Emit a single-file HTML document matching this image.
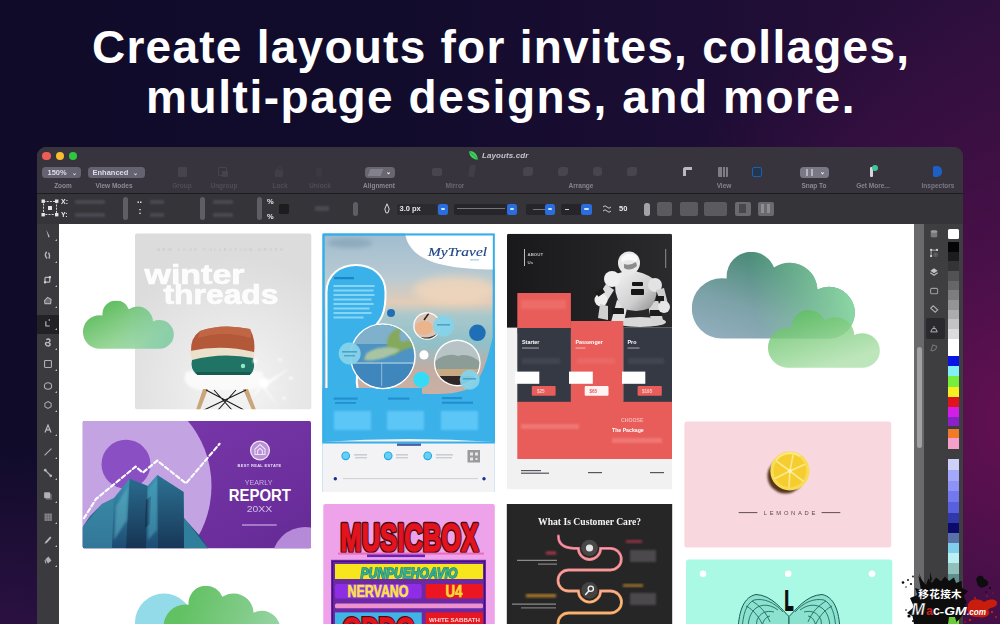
<!DOCTYPE html>
<html><head><meta charset="utf-8">
<style>
html,body{margin:0;padding:0;}
body{width:1000px;height:624px;overflow:hidden;position:relative;font-family:"Liberation Sans",sans-serif;background:#140d2e;}
#bg{position:absolute;left:0;top:0;width:1000px;height:624px;
background:
radial-gradient(ellipse 420px 440px at 1020px 420px, rgba(104,16,84,0.92) 0%, rgba(86,16,78,0.64) 40%, rgba(50,14,64,0) 100%),
radial-gradient(ellipse 260px 200px at 0px 640px, rgba(70,22,90,0.55) 0%, rgba(40,14,66,0) 100%),
linear-gradient(90deg,#0f0b29 0%,#120c2c 40%,#1c0d34 70%,#2c0f3c 100%);}
.a{position:absolute;}
h1{position:absolute;margin:0;left:0;top:0;width:1000px;color:#fff;font-weight:bold;font-size:46px;line-height:49px;white-space:nowrap;}
h1 span{display:block;position:absolute;}
#l1{left:92px;top:23.4px;letter-spacing:1.25px;}
#l2{left:146px;top:72.5px;letter-spacing:1.57px;}
#win{position:absolute;left:37px;top:147px;width:926px;height:490px;border-radius:9px 9px 0 0;background:#37343d;overflow:hidden;}
#canvas{position:absolute;left:22px;top:77px;width:855px;height:420px;background:#fff;overflow:hidden;}

#tb{position:absolute;left:0;top:0;width:926px;height:46px;background:#37343d;}
#tbline{position:absolute;left:0;top:45.5px;width:926px;height:1.5px;background:#1d1c21;}
.tl{position:absolute;top:4.5px;width:8.5px;height:8.5px;border-radius:50%;}
.pill{position:absolute;top:19.5px;height:11.5px;border-radius:3.5px;background:#656371;color:#dddbe6;font-size:7.5px;line-height:11.5px;font-weight:bold;filter:blur(0.6px);white-space:nowrap;}
.lbl{position:absolute;top:34.5px;font-size:6.5px;line-height:8px;color:#8d8b98;font-weight:bold;filter:blur(0.7px);white-space:nowrap;text-align:center;}
.lbl.dim{color:#4f4d58;}
.ic{position:absolute;filter:blur(0.7px);}
#pb{position:absolute;left:0;top:47px;width:926px;height:30px;background:#353439;}
.pt{position:absolute;font-size:7px;line-height:8px;color:#e8e8ec;font-weight:bold;filter:blur(0.4px);white-space:nowrap;}
.pf{position:absolute;height:4px;background:#4b4a52;filter:blur(1px);border-radius:1px;}
.sp{position:absolute;top:3px;width:5px;height:23px;border-radius:2.5px;background:#5f5e64;filter:blur(0.6px);}
.bb{position:absolute;top:9.5px;width:10.5px;height:11px;border-radius:2.5px;background:#2a6ddf;filter:blur(0.4px);}
.bb:after{content:"";position:absolute;left:3px;top:4px;width:4.5px;height:2px;background:#cfe0ff;border-radius:1px;}
.df{position:absolute;top:9.5px;height:11px;background:#26252a;border-radius:2px;}
.gs{position:absolute;top:7.5px;height:14px;background:#5b5a5f;border-radius:2px;filter:blur(0.5px);}

#tbx{position:absolute;left:0;top:77px;width:22px;height:420px;background:#3b3a3f;}
#tbx svg{position:absolute;left:2.5px;filter:blur(0.45px);opacity:0.78;transform:scale(0.86);}
.tri{position:absolute;left:17.5px;width:0;height:0;border-left:2.5px solid transparent;border-bottom:2.5px solid #b9b9be;}
#sb{position:absolute;left:877px;top:77px;width:10px;height:420px;background:#6a696c;}
#sbt{position:absolute;left:2.5px;top:123px;width:5.5px;height:101px;border-radius:3px;background:#a1a0a3;}
#dk{position:absolute;left:887px;top:77px;width:39px;height:420px;background:#3e3d40;}
#dk svg{position:absolute;left:1.5px;filter:blur(0.45px);opacity:0.75;transform:scale(0.82);}
#pal{position:absolute;left:910.5px;top:82px;width:11.5px;}
#pal i{position:absolute;left:0;width:11.5px;display:block;}
/*SECTION-CSS*/
</style></head><body>
<div id="bg"></div>
<h1><span id="l1">Create layouts for invites, collages,</span><span id="l2">multi-page designs, and more.</span></h1>
<div id="win">
<div id="tb">
<div class="tl" style="left:5px;background:#ee5c56;"></div>
<div class="tl" style="left:18.5px;background:#f6bd30;"></div>
<div class="tl" style="left:31.5px;background:#2dc840;"></div>
<svg class="ic" style="left:431px;top:3px;" width="11" height="11" viewBox="0 0 11 11"><path d="M1 1.5 C5 0.5 9 3 10 9.5 C6 10 1.5 7 1 1.5Z" fill="#3ed35c"/><path d="M1 1.5 C4 4 7 6 10 9.5" stroke="#1f8a3a" stroke-width="0.8" fill="none"/></svg>
<div class="a" style="left:445px;top:4px;font-size:8px;line-height:10px;font-weight:bold;font-style:italic;color:#c4c3cb;filter:blur(0.5px);letter-spacing:0.1px;">Layouts.cdr</div>
<div class="pill" style="left:4.5px;width:39.5px;"><span style="margin-left:6px;">150%</span><span style="margin-left:5px;font-size:6px;">&#x2304;</span></div>
<div class="pill" style="left:50.5px;width:57px;"><span style="margin-left:5px;">Enhanced</span><span style="margin-left:5px;font-size:6px;">&#x2304;</span></div>
<div class="lbl" style="left:16px;width:20px;">Zoom</div>
<div class="lbl" style="left:54px;width:46px;">View Modes</div>
<div class="lbl dim" style="left:134px;width:22px;">Group</div>
<div class="lbl dim" style="left:171px;width:32px;">Ungroup</div>
<div class="lbl dim" style="left:234px;width:18px;">Lock</div>
<div class="lbl dim" style="left:270px;width:26px;">Unlock</div>
<div class="ic" style="left:141px;top:20px;width:9px;height:10px;background:#45434d;border-radius:1px;"></div>
<div class="ic" style="left:181px;top:20px;width:7px;height:7px;border:1.5px solid #45434d;border-radius:1px;"></div>
<div class="ic" style="left:185px;top:24px;width:6px;height:6px;background:#45434d;border-radius:1px;"></div>
<div class="ic" style="left:238px;top:23px;width:8px;height:7px;background:#403e48;border-radius:1px;"></div>
<div class="ic" style="left:240px;top:19px;width:3px;height:5px;border:1px solid #403e48;border-radius:2px 2px 0 0;"></div>
<div class="ic" style="left:279px;top:20px;width:6px;height:10px;background:#3b3943;border-radius:3px;"></div>
<div class="pill" style="left:327.5px;width:30px;background:#68666f;"><span class="a" style="left:4px;top:2px;width:13px;height:7px;background:#83818c;transform:skewX(-20deg);"></span><span class="a" style="left:21px;top:0;font-size:6px;color:#fff;">&#x2304;</span></div>
<div class="lbl" style="left:322px;width:40px;color:#8a8894;">Alignment</div>
<div class="lbl dim" style="left:404px;width:28px;color:#6a6872;">Mirror</div>
<div class="ic" style="left:395px;top:21px;width:10px;height:8px;background:#47454f;border-radius:2px;"></div>
<div class="ic" style="left:432px;top:18px;width:6px;height:12px;background:#403e48;border-radius:1px;transform:skewX(-8deg);"></div>
<div class="lbl" style="left:528px;width:32px;color:#85838e;">Arrange</div>
<div class="ic" style="left:486px;top:20px;width:10px;height:9px;background:#47454f;border-radius:4px 2px 4px 2px;"></div>
<div class="ic" style="left:521px;top:20px;width:10px;height:9px;background:#47454f;border-radius:4px 2px 4px 2px;"></div>
<div class="ic" style="left:556px;top:20px;width:9px;height:9px;background:#47454f;border-radius:3px;"></div>
<div class="ic" style="left:590px;top:20px;width:10px;height:9px;background:#47454f;border-radius:4px 2px 4px 2px;"></div>
<div class="ic" style="left:646px;top:20px;width:9px;height:9px;border-left:3px solid #b9b7c0;border-top:3px solid #b9b7c0;border-radius:3px 0 0 0;box-sizing:border-box;"></div>
<div class="ic" style="left:681px;top:20px;width:10px;height:10px;background:#7e7c86;border-radius:1px;"></div>
<div class="ic" style="left:684.5px;top:20px;width:1px;height:10px;background:#3a3840;"></div>
<div class="ic" style="left:687.5px;top:20px;width:1px;height:10px;background:#3a3840;"></div>
<div class="ic" style="left:715px;top:20px;width:10px;height:10px;border:1.5px solid #1f5fae;box-sizing:border-box;border-radius:2px;background:#23364f;"></div>
<div class="lbl" style="left:676px;width:22px;color:#85838e;">View</div>
<div class="pill" style="left:762.5px;width:29px;background:#7a7884;"><span class="a" style="left:6px;top:2px;width:2.5px;height:7px;background:#b5b3bd;"></span><span class="a" style="left:11px;top:2px;width:2.5px;height:7px;background:#b5b3bd;"></span><span class="a" style="left:20px;top:0;font-size:6px;color:#fff;">&#x2304;</span></div>
<div class="lbl" style="left:760px;width:34px;color:#8a8894;">Snap To</div>
<div class="ic" style="left:833px;top:20px;width:3px;height:10px;background:#d8d6de;border-radius:1px;"></div>
<div class="ic" style="left:835px;top:18px;width:6px;height:6px;background:#3fc79a;border-radius:50%;"></div>
<div class="lbl" style="left:815px;width:42px;color:#85838e;">Get More...</div>
<div class="ic" style="left:896px;top:19px;width:9px;height:11px;background:#1d5fc4;border-radius:2px 5px 5px 2px;"></div>
<div class="lbl" style="left:880px;width:42px;color:#7b7985;">Inspectors</div>
</div>
<div id="tbline"></div>
<div id="pb">
<svg class="a" style="left:4px;top:5px;filter:blur(0.4px);" width="18" height="18" viewBox="0 0 18 18"><rect x="2.5" y="2.5" width="13" height="13" fill="none" stroke="#d5d5da" stroke-width="1" stroke-dasharray="2 1.2"/><g fill="#e6e6ea"><rect x="0.5" y="0.5" width="3.4" height="3.4"/><rect x="14" y="0.5" width="3.4" height="3.4"/><rect x="0.5" y="14" width="3.4" height="3.4"/><rect x="14" y="14" width="3.4" height="3.4"/><rect x="7" y="7" width="4" height="4"/></g></svg>
<div class="pt" style="left:24px;top:4px;">X:</div>
<div class="pt" style="left:24px;top:17px;">Y:</div>
<div class="pf" style="left:38px;top:6px;width:30px;"></div>
<div class="pf" style="left:38px;top:19px;width:30px;"></div>
<div class="sp" style="left:86px;"></div>
<div class="pt" style="left:100px;top:2px;font-size:9px;">..</div>
<div class="pt" style="left:101.5px;top:13px;font-size:9px;">:</div>
<div class="pf" style="left:113px;top:6px;width:14px;"></div>
<div class="pf" style="left:113px;top:19px;width:14px;"></div>
<div class="sp" style="left:163px;"></div>
<div class="pf" style="left:176px;top:6px;width:20px;"></div>
<div class="pf" style="left:176px;top:19px;width:20px;"></div>
<div class="sp" style="left:219.5px;"></div>
<div class="pt" style="left:230px;top:3.5px;font-size:7.5px;">%</div>
<div class="pt" style="left:230px;top:18.5px;font-size:7.5px;">%</div>
<div class="a" style="left:242px;top:9.5px;width:10px;height:10px;background:#1d1d20;border-radius:1.5px;"></div>
<div class="pf" style="left:278px;top:12px;width:14px;height:5px;"></div>
<div class="sp" style="left:316px;top:8px;height:14px;"></div>
<svg class="a" style="left:347px;top:9px;filter:blur(0.4px);" width="6" height="11" viewBox="0 0 6 11"><path d="M3 0.8 L5.2 6 L4 9.8 L2 9.8 L0.8 6Z" fill="none" stroke="#d8d8dd" stroke-width="1"/></svg>
<div class="df" style="left:360px;width:40px;background:#2b2a2f;"></div>
<div class="pt" style="left:362.5px;top:11px;font-size:7.5px;">3.0 px</div>
<div class="bb" style="left:400.5px;"></div>
<div class="df" style="left:417px;width:53px;"></div>
<div class="a" style="left:420px;top:14px;width:48px;height:1.2px;background:#77767c;"></div>
<div class="bb" style="left:469.5px;"></div>
<div class="df" style="left:489px;width:20px;"></div>
<div class="a" style="left:496px;top:14.5px;width:12px;height:1.2px;background:#77767c;"></div>
<div class="bb" style="left:507.5px;"></div>
<div class="df" style="left:524px;width:21px;"></div>
<div class="a" style="left:528px;top:14.5px;width:4px;height:1.4px;background:#d0d0d4;"></div>
<div class="bb" style="left:544px;"></div>
<svg class="a" style="left:565px;top:10px;filter:blur(0.3px);" width="10" height="10" viewBox="0 0 10 10"><path d="M1 3 Q3 0.5 5 3 T9 3 M1 7 Q3 4.5 5 7 T9 7" fill="none" stroke="#c8c8cc" stroke-width="1"/></svg>
<div class="pt" style="left:582px;top:11px;font-size:7.5px;">50</div>
<div class="sp" style="left:607px;top:8.5px;height:13px;width:5.5px;background:#a3a2a8;"></div>
<div class="gs" style="left:620px;width:14.5px;"></div>
<div class="gs" style="left:643px;width:18px;"></div>
<div class="gs" style="left:667px;width:23px;"></div>
<div class="gs" style="left:697.5px;width:16px;background:#6b6a6f;"></div>
<div class="a" style="left:702px;top:10px;width:7px;height:9px;background:#48474c;filter:blur(0.6px);"></div>
<div class="gs" style="left:720.5px;width:16.5px;background:#6b6a6f;"></div>
<div class="a" style="left:724px;top:10px;width:3px;height:9px;background:#8f8e94;filter:blur(0.6px);"></div>
<div class="a" style="left:730px;top:10px;width:3px;height:9px;background:#8f8e94;filter:blur(0.6px);"></div>
</div>
<div id="tbx">
<div class="a" style="left:0;top:91px;width:22px;height:19px;background:#222125;"></div>
<svg style="top:2.0px" width="16" height="16" viewBox="0 0 16 16"><path d="M6 3 L10 11 L8.5 12 Z" fill="#e4e4e8"/></svg><div class="tri" style="top:15.0px"></div>
<svg style="top:24.0px" width="16" height="16" viewBox="0 0 16 16"><path d="M6.5 3 C4 6 5 9 7 11 M8.5 4 C10.5 7 10 9 9 11" stroke="#d8d8dc" stroke-width="1.6" fill="none"/></svg><div class="tri" style="top:37.0px"></div>
<svg style="top:48.0px" width="16" height="16" viewBox="0 0 16 16"><path d="M4.5 5 H10 V10.5 M4.5 5 V10.5 H10" stroke="#d8d8dc" stroke-width="1.5" fill="none"/><rect x="9" y="3.5" width="2.4" height="2.4" fill="#fff"/><rect x="3.3" y="9.5" width="2.4" height="2.4" fill="#fff"/></svg><div class="tri" style="top:61.0px"></div>
<svg style="top:69.0px" width="16" height="16" viewBox="0 0 16 16"><path d="M4 7.5 L7.5 3.8 L11.5 6 L11 11 L4.5 11Z" stroke="#d0d0d4" stroke-width="1.4" fill="#77767c"/></svg><div class="tri" style="top:82.0px"></div>
<svg style="top:91.0px" width="16" height="16" viewBox="0 0 16 16"><path d="M5.5 11.5 L5.5 6 M5 11.5 H10" stroke="#e8e8ec" stroke-width="1.3" fill="none"/><circle cx="9.5" cy="4.5" r="0.9" fill="#fff"/></svg><div class="tri" style="top:104.0px"></div>
<svg style="top:111.0px" width="16" height="16" viewBox="0 0 16 16"><path d="M6 4 C10 2 12 6 8.5 7.5 C12 8 10.5 13 6.5 11 C4 9.5 5 7 7 7.5" stroke="#e4e4e8" stroke-width="1.6" fill="none"/></svg><div class="tri" style="top:124.0px"></div>
<svg style="top:132.0px" width="16" height="16" viewBox="0 0 16 16"><rect x="4" y="4" width="8" height="8" rx="1" stroke="#d0d0d4" stroke-width="1.3" fill="none"/></svg><div class="tri" style="top:145.0px"></div>
<svg style="top:153.5px" width="16" height="16" viewBox="0 0 16 16"><ellipse cx="8" cy="8" rx="4.2" ry="3.8" stroke="#d0d0d4" stroke-width="1.3" fill="none"/></svg><div class="tri" style="top:166.5px"></div>
<svg style="top:173.0px" width="16" height="16" viewBox="0 0 16 16"><path d="M8 4 L11.6 6 L11.6 10 L8 12 L4.4 10 L4.4 6Z" stroke="#c8c8cc" stroke-width="1.2" fill="none"/></svg><div class="tri" style="top:186.0px"></div>
<svg style="top:197.0px" width="16" height="16" viewBox="0 0 16 16"><path d="M4.5 12 L8 3.5 L11.5 12 M5.8 9 H10.2" stroke="#e0e0e4" stroke-width="1.4" fill="none"/></svg><div class="tri" style="top:210.0px"></div>
<svg style="top:220.0px" width="16" height="16" viewBox="0 0 16 16"><path d="M4 12 L12 4" stroke="#d0d0d4" stroke-width="1.3" fill="none"/></svg><div class="tri" style="top:233.0px"></div>
<svg style="top:241.0px" width="16" height="16" viewBox="0 0 16 16"><path d="M4.5 4.5 L11.5 11.5" stroke="#c8c8cc" stroke-width="1.5" fill="none"/><circle cx="4.8" cy="4.8" r="1.6" fill="#d8d8dc"/><circle cx="11.2" cy="11.2" r="1.6" fill="#d8d8dc"/></svg><div class="tri" style="top:254.0px"></div>
<svg style="top:264.0px" width="16" height="16" viewBox="0 0 16 16"><rect x="5.5" y="5.5" width="7" height="7" rx="1" fill="#77767c"/><rect x="3.5" y="3.5" width="7" height="7" rx="1" fill="#d4d4d8"/></svg><div class="tri" style="top:277.0px"></div>
<svg style="top:285.0px" width="16" height="16" viewBox="0 0 16 16"><rect x="4" y="4" width="8.5" height="8.5" fill="#a2a1a6"/><path d="M4 7 H12.5 M4 10 H12.5 M7 4 V12.5 M10 4 V12.5" stroke="#5a595e" stroke-width="0.6"/></svg><div class="tri" style="top:298.0px"></div>
<svg style="top:308.0px" width="16" height="16" viewBox="0 0 16 16"><path d="M4 12.5 L5 10 L10.5 4 L12 5.5 L6.5 11.5Z" fill="#e0e0e4"/></svg><div class="tri" style="top:321.0px"></div>
<svg style="top:328.0px" width="16" height="16" viewBox="0 0 16 16"><path d="M5 7 L8.5 4 L12 8.5 L8 12 Z" fill="#d0d0d4"/><path d="M4.5 8 L5.5 12" stroke="#d0d0d4" stroke-width="1.2"/></svg><div class="tri" style="top:341.0px"></div>
</div>
<div id="canvas">
<svg class="a" style="left:0;top:0;" width="855" height="400" viewBox="59 224 855 400" font-family="Liberation Sans, sans-serif">
<defs>
<filter id="b05" x="-20%" y="-20%" width="140%" height="140%"><feGaussianBlur stdDeviation="0.5"/></filter>
<filter id="b1" x="-20%" y="-20%" width="140%" height="140%"><feGaussianBlur stdDeviation="1"/></filter>
<filter id="b2" x="-30%" y="-30%" width="160%" height="160%"><feGaussianBlur stdDeviation="2"/></filter>
<filter id="b4" x="-50%" y="-50%" width="200%" height="200%"><feGaussianBlur stdDeviation="4"/></filter>
<filter id="b8" x="-50%" y="-50%" width="200%" height="200%"><feGaussianBlur stdDeviation="8"/></filter>
<g id="cl"><circle cx="17.3" cy="31" r="17.3"/><circle cx="32" cy="12.8" r="12.8"/><circle cx="57.2" cy="18.2" r="12"/><circle cx="76.4" cy="33.8" r="14.4"/><rect x="17.3" y="14" width="59.1" height="34.2"/><rect x="10" y="20" width="30" height="20"/></g>
<linearGradient id="gc1" gradientUnits="userSpaceOnUse" x1="25" y1="2" x2="50" y2="48"><stop offset="0" stop-color="#5cbd5c"/><stop offset="0.5" stop-color="#84cd84"/><stop offset="1" stop-color="#abdfa9"/></linearGradient>
<linearGradient id="gc1b" gradientUnits="userSpaceOnUse" x1="40" y1="0" x2="91" y2="20"><stop offset="0" stop-color="#7cc8a0" stop-opacity="0"/><stop offset="1" stop-color="#7cc8a8" stop-opacity="0.75"/></linearGradient>
<linearGradient id="gc2" gradientUnits="userSpaceOnUse" x1="25" y1="0" x2="10" y2="48"><stop offset="0" stop-color="#4c8c7a"/><stop offset="0.55" stop-color="#7da2a8"/><stop offset="1" stop-color="#92aebe"/></linearGradient>
<linearGradient id="gc2b" gradientUnits="userSpaceOnUse" x1="35" y1="30" x2="88" y2="22"><stop offset="0" stop-color="#86cf9e" stop-opacity="0"/><stop offset="1" stop-color="#8ad6a2" stop-opacity="1"/></linearGradient>
<linearGradient id="gc3" gradientUnits="userSpaceOnUse" x1="30" y1="0" x2="45" y2="48"><stop offset="0" stop-color="#60bf60"/><stop offset="1" stop-color="#aee0ac"/></linearGradient>
<linearGradient id="gc4" gradientUnits="userSpaceOnUse" x1="20" y1="0" x2="91" y2="25"><stop offset="0" stop-color="#62c162"/><stop offset="0.6" stop-color="#7fcb86"/><stop offset="1" stop-color="#96d4a4"/></linearGradient>
</defs>
<g id="c1">
<defs><radialGradient id="g1" gradientUnits="userSpaceOnUse" cx="235" cy="385" r="130"><stop offset="0" stop-color="#f6f6f6"/><stop offset="0.45" stop-color="#e9e9ea"/><stop offset="1" stop-color="#dcdcdd"/></radialGradient><clipPath id="cp1"><rect x="135" y="233.5" width="176.3" height="175.8" rx="2"/></clipPath></defs>
<rect x="135" y="233.5" width="176.3" height="175.8" rx="2" fill="url(#g1)"/>
<g clip-path="url(#cp1)">
<text x="157" y="251" font-size="4.4" textLength="126" lengthAdjust="spacing" fill="#c6c6c8" filter="url(#b05)">NEW LOOK COLLECTION DROPS</text>
<g filter="url(#b05)" fill="#fff" fill-opacity="0.9" font-weight="bold" font-size="27.5" stroke="#fff" stroke-opacity="0.9" stroke-width="0.7">
<text id="wt1" x="144.5" y="284.4" textLength="100" lengthAdjust="spacingAndGlyphs">winter</text>
<text id="wt2" x="163.5" y="303.6" textLength="115" lengthAdjust="spacingAndGlyphs">threads</text></g>
<!-- chair seat -->
<path d="M186 372 Q222 366 262 372 Q268 386 250 390 L200 390 Q180 386 186 372Z" fill="#fafafa" filter="url(#b1)"/>
<!-- legs -->
<path d="M203 389 L196 410 L200 410 L208 389Z M243 389 L252 410 L256 410 L248 389Z" fill="#c9a57a"/>
<path d="M206 390 L244 410 M246 390 L204 410 M214 390 L232 410 M236 390 L218 410" stroke="#1c1c1c" stroke-width="1.1" fill="none"/>
<!-- clothes -->
<path d="M191 352 Q190 338 200 331 Q222 323 250 329 Q256 340 254 354 Q222 352 191 352Z" fill="#b4583a"/>
<path d="M200 331 Q222 323 250 329 Q252 334 251 338 Q224 330 198 338Z" fill="#c46a48" opacity="0.8"/>
<path d="M190 351 Q222 344 254 352 L254 361 Q222 356 192 361Z" fill="#ebe0cc"/>
<path d="M192 360 Q222 352 253 358 Q256 368 251 374 L196 374 Q190 368 192 360Z" fill="#1f7465"/>
<path d="M196 372 L251 372 L250 375 L197 375Z" fill="#175a4e"/>
<circle cx="243" cy="366" r="2.2" fill="#8fe8c8" filter="url(#b05)"/>
<!-- sparkles -->
<g fill="#fff" filter="url(#b1)"><circle cx="264" cy="383" r="5"/><circle cx="255" cy="361" r="2.2"/><circle cx="280" cy="360" r="1.4"/><circle cx="291" cy="378" r="1.6"/><circle cx="284" cy="398" r="1.5"/><path d="M264 383 L290 368 L266 386 L292 392 L264 386 L278 406 L262 387 L250 400 L261 384 L240 380 Z" opacity="0.9"/></g>
</g></g>
<g id="c2">
<defs>
<clipPath id="cp2"><rect x="322.5" y="233.5" width="172.3" height="258.5" rx="1.5"/></clipPath>
<linearGradient id="sky" x1="0" y1="0" x2="0" y2="1"><stop offset="0" stop-color="#a2bdd0"/><stop offset="0.26" stop-color="#b8cad2"/><stop offset="0.42" stop-color="#e2ccb8"/><stop offset="0.5" stop-color="#a8c8cc"/><stop offset="0.68" stop-color="#90c0c8"/><stop offset="0.84" stop-color="#c4aca2"/><stop offset="1" stop-color="#ccb0a4"/></linearGradient>
<clipPath id="cpa"><circle cx="382.8" cy="356.2" r="31.5"/></clipPath>
<clipPath id="cpb"><circle cx="427" cy="326" r="12.6"/></clipPath>
<clipPath id="cpc"><circle cx="457.3" cy="363" r="22"/></clipPath>
</defs>
<g clip-path="url(#cp2)">
<rect x="322" y="233" width="174" height="260" fill="#3bb1ea"/>
<rect x="324.5" y="235.5" width="168.3" height="160" fill="url(#sky)"/>
<ellipse cx="455" cy="290" rx="42" ry="14" fill="#f3d6ba" opacity="0.8" filter="url(#b4)"/>
<ellipse cx="350" cy="243" rx="22" ry="5" fill="#7f9db0" opacity="0.6" filter="url(#b2)"/>
<path d="M405 233 C409 260 440 269.5 496 269.5 L496 233Z" fill="#ffffff"/>
<text x="428" y="256" font-size="11.5" font-style="italic" fill="#1f4585" textLength="59" lengthAdjust="spacingAndGlyphs" font-family="Liberation Serif, serif" filter="url(#b05)" stroke="#1f4585" stroke-width="0.15">MyTravel</text>
<rect x="470" y="259" width="9" height="1.6" fill="#b9d7ea" filter="url(#b05)"/>
<!-- blue right/bottom region -->
<path d="M496 326 C488 352 486 376 470 388 C450 398 420 392 400 394 L322 394 L322 445 L496 445Z" fill="#3bb1ea"/>
<!-- left blob -->
<path d="M326.5 394 L326.5 292 C326.5 256 385.5 256 385.5 292 C386 318 378 322 372 330 C360 350 352 380 360 396Z" fill="#3bb1ea" stroke="#fff" stroke-width="2"/>
<rect x="322" y="388" width="100" height="12" fill="#3bb1ea"/>
<rect x="334" y="277" width="20" height="2.2" fill="#1b86c4" filter="url(#b05)"/>
<g fill="#8fdaf8" filter="url(#b05)" opacity="0.9"><rect x="333.5" y="285" width="41" height="2"/><rect x="333.5" y="289.5" width="40" height="2"/><rect x="333.5" y="294" width="41" height="2"/><rect x="333.5" y="298.5" width="38" height="2"/><rect x="333.5" y="303" width="40" height="2"/><rect x="333.5" y="307.5" width="36" height="2"/><rect x="333.5" y="312" width="38" height="2"/><rect x="333.5" y="316.5" width="30" height="2"/></g>
<!-- circles -->
<circle cx="382.8" cy="356.2" r="33" fill="#fff"/>
<g clip-path="url(#cpa)"><rect x="350" y="322" width="66" height="68" fill="#4d93c4"/><rect x="350" y="322" width="66" height="22" fill="#7fb0cc"/><rect x="350" y="364" width="66" height="26" fill="#3f86bd"/>
<path d="M388 352 C384 338 392 328 404 327 C398 332 398 338 402 342 C410 338 416 342 418 348 C410 346 400 350 394 356Z" fill="#86a85c" filter="url(#b1)"/><path d="M366 354 C376 346 392 346 400 350 C392 356 376 362 364 360Z" fill="#a9c4a2" filter="url(#b1)"/><rect x="350" y="362" width="66" height="2" fill="#9cc6dc" opacity="0.7"/><rect x="381" y="362" width="1.2" height="24" fill="#9cc6dc" opacity="0.7"/></g>
<circle cx="427" cy="326" r="13.8" fill="#fff"/>
<g clip-path="url(#cpb)"><rect x="412" y="312" width="30" height="28" fill="#d9c4b6"/><ellipse cx="424" cy="328" rx="9" ry="7" fill="#eab48c"/><path d="M414 334 Q426 342 440 332 L440 340 L414 340Z" fill="#3c2c28"/><path d="M424 320 L429 313" stroke="#2a2020" stroke-width="1.5"/></g>
<circle cx="457.3" cy="363" r="23.4" fill="#fff"/>
<g clip-path="url(#cpc)"><rect x="434" y="340" width="48" height="48" fill="#b7c3c5"/><path d="M434 362 Q446 352 458 356 Q470 352 482 364 L482 372 L434 372Z" fill="#8b9d96"/><rect x="434" y="369" width="48" height="8" fill="#c7a982"/><rect x="434" y="376" width="48" height="12" fill="#2f2826"/></g>
<circle cx="391" cy="313" r="4" fill="#1f6fb6"/><circle cx="477.4" cy="332.8" r="8.3" fill="#1f6fb6"/>
<circle cx="424" cy="354.9" r="4.6" fill="#fff"/>
<circle cx="421.4" cy="379.7" r="8" fill="#35dbf6"/>
<g fill="#86d3ea" opacity="0.95"><circle cx="349.7" cy="353.5" r="11"/><circle cx="443.5" cy="326" r="10.5"/><circle cx="469.7" cy="379.7" r="10"/></g>
<g fill="#4aa4c6" filter="url(#b05)"><rect x="342" y="351" width="15" height="1.6"/><rect x="344" y="355" width="11" height="1.4"/><rect x="437" y="324" width="13" height="1.6"/><rect x="463" y="378" width="13" height="1.6"/></g>
<!-- headings & boxes -->
<g fill="#238fcf" filter="url(#b05)"><rect x="333.6" y="397.5" width="24" height="2.2"/><rect x="335" y="402" width="21" height="1.8"/><rect x="388" y="397.5" width="21.5" height="2.2"/><rect x="442" y="397" width="20" height="2.2"/><rect x="442" y="401.6" width="31" height="2.2"/></g>
<g fill="#5cc6f6" filter="url(#b1)"><rect x="334" y="411" width="37" height="19"/><rect x="387" y="411" width="37" height="19"/><rect x="441" y="411" width="37" height="19"/></g>
<!-- bottom -->
<path d="M322 442 Q408 436 496 442 L496 493 L322 493Z" fill="#f3f3f5"/>
<rect x="397" y="443.3" width="24" height="2.6" fill="#2a4a9a" filter="url(#b05)" opacity="0.85"/>
<g><circle cx="345.7" cy="455.8" r="3.8" fill="#5fd2f6" stroke="#2aa6de" stroke-width="1.1"/><circle cx="388.2" cy="455.8" r="3.8" fill="#5fd2f6" stroke="#2aa6de" stroke-width="1.1"/><circle cx="427.7" cy="455.8" r="3.8" fill="#5fd2f6" stroke="#2aa6de" stroke-width="1.1"/></g>
<g fill="#c9cdd3" filter="url(#b05)"><rect x="354" y="454" width="13" height="1.6"/><rect x="355" y="457" width="12" height="1.4"/><rect x="396" y="454" width="12" height="1.6"/><rect x="396" y="457" width="12" height="1.4"/><rect x="436" y="454" width="17" height="1.6"/><rect x="436" y="457" width="16" height="1.4"/></g>
<g filter="url(#b05)"><rect x="467.5" y="450" width="12.5" height="12.5" fill="#9a9a9c"/><path d="M470 452.5h3v3h-3z M475 452.5h3v3h-3z M470 457.5h3v3h-3z M475.5 458h2v2h-2z" fill="#e6e6e8"/></g>
<rect x="343" y="478.3" width="135" height="0.8" fill="#c3c5cc"/>
<circle cx="335.3" cy="478.7" r="1.7" fill="#18308a"/><circle cx="484" cy="478.7" r="1.7" fill="#18308a"/>
</g>
<rect x="323.5" y="234.5" width="170.3" height="208" fill="none" stroke="#36aee8" stroke-width="2"/>
</g>
<g id="c3">
<defs><clipPath id="cp3"><rect x="507" y="233.8" width="165" height="255.5" rx="1.5"/></clipPath>
<linearGradient id="dk3" x1="0" y1="0" x2="1" y2="0"><stop offset="0" stop-color="#19191b"/><stop offset="0.6" stop-color="#232325"/><stop offset="1" stop-color="#2b2b2d"/></linearGradient>
<linearGradient id="rb" x1="0" y1="0" x2="1" y2="1"><stop offset="0" stop-color="#f4f4f4"/><stop offset="0.6" stop-color="#cfcfcf"/><stop offset="1" stop-color="#8a8a8a"/></linearGradient></defs>
<rect x="507" y="233.8" width="165" height="255.5" rx="1.5" fill="#f1f1f2"/>
<g clip-path="url(#cp3)">
<rect x="507" y="233.8" width="165" height="93.8" fill="url(#dk3)"/>
<!-- robot -->
<g filter="url(#b05)">
<ellipse cx="640" cy="322" rx="26" ry="5" fill="#d8d8d8"/>
<path d="M617 300 L611 322 L623 326 L628 304Z" fill="#e2e2e2"/><path d="M648 304 L652 326 L664 324 L658 300Z" fill="#d4d4d4"/>
<rect x="612" y="308" width="12" height="6" fill="#1a1a1a"/><rect x="650" y="310" width="12" height="6" fill="#1a1a1a"/>
<path d="M616 274 Q636 266 655 280 Q660 296 650 308 Q636 314 622 308 Q612 292 616 274Z" fill="url(#rb)"/>
<rect x="632" y="282" width="11" height="4" rx="1" fill="#151515"/><rect x="631" y="289" width="13" height="6" rx="1" fill="#151515"/>
<circle cx="612" cy="279" r="8" fill="#f0f0f0"/><circle cx="655" cy="285" r="7" fill="#e3e3e3"/>
<path d="M606 284 L597 298 L604 306 L614 290Z" fill="#dcdcdc"/><circle cx="601" cy="300" r="6.5" fill="#efefef"/><rect x="596" y="290" width="8" height="5" fill="#1a1a1a" transform="rotate(-35 600 292)"/>
<path d="M600 304 L598 318 L608 320 L608 306Z" fill="#d0d0d0"/>
<path d="M656 290 L662 306 L668 304 L664 288Z" fill="#cfcfcf"/><circle cx="664" cy="307" r="6" fill="#e6e6e6"/><rect x="656" y="296" width="8" height="5" fill="#1a1a1a"/>
<ellipse cx="629" cy="263" rx="11" ry="11.5" fill="#e9e9e9"/><path d="M621 258 Q629 250 638 257 L636 262 Q629 258 622 262Z" fill="#fafafa"/><path d="M624 268 Q630 272 637 266 L636 262 Q630 266 624 264Z" fill="#8c8c8c"/>
</g>
<rect x="524" y="249" width="1" height="17" fill="#bdbdbd"/><rect x="665.2" y="249" width="1" height="19" fill="#8d8d8d"/>
<g fill="#bcbcbc" font-size="4.4" font-weight="bold" filter="url(#b05)"><text x="527.5" y="255.6">ABOUT</text><text x="527.5" y="264">Us</text></g>
<!-- blocks -->
<rect x="517.3" y="293" width="53.6" height="40" fill="#e85c59"/>
<rect x="521" y="300" width="45" height="9" fill="#ee6c68" filter="url(#b1)"/>
<rect x="517.3" y="401" width="155" height="58" fill="#e85c59"/>
<rect x="570.9" y="321" width="52.4" height="90" fill="#e85c59"/>
<rect x="517.3" y="328" width="53.6" height="73.8" fill="#353943"/>
<rect x="623.3" y="327.6" width="49" height="74.2" fill="#353943"/>
<g font-size="5.4" font-weight="bold" fill="#fff" filter="url(#b05)"><text x="522" y="343.5">Starter</text><text x="575.5" y="343.5">Passenger</text><text x="627.5" y="343.5">Pro</text></g>
<g filter="url(#b05)"><rect x="522" y="347.4" width="17" height="1.3" fill="#8a8e98"/><rect x="575.5" y="347.4" width="10" height="1.3" fill="#f3a19e"/><rect x="627.5" y="347.4" width="12" height="1.3" fill="#8a8e98"/>
<rect x="522" y="358" width="38" height="6" fill="#3f444f" filter="url(#b1)"/><rect x="628" y="358" width="36" height="6" fill="#3f444f" filter="url(#b1)"/><rect x="577" y="358" width="38" height="6" fill="#ea6865" filter="url(#b1)"/></g>
<g fill="#fff"><rect x="515" y="371.6" width="24.3" height="12.2"/><rect x="569" y="371.6" width="23.8" height="12.2"/><rect x="622" y="371.6" width="23.3" height="12.2"/></g>
<rect x="531.8" y="386" width="23.8" height="9.8" rx="1" fill="#e85c59"/><rect x="637.6" y="386" width="24.2" height="9.8" rx="1" fill="#e85c59"/>
<rect x="584.7" y="386" width="23.8" height="9.8" rx="1" fill="#fdf3f2"/>
<g font-size="4.6" font-weight="bold" filter="url(#b05)"><text x="537" y="392.8" fill="#fbd0ce">$25</text><text x="589.5" y="392.8" fill="#e85c59">$65</text><text x="642" y="392.8" fill="#fbd0ce">$195</text></g>
<g fill="#fff" font-size="5.2" font-weight="bold" filter="url(#b05)"><text x="621" y="421.6" fill="#f7b6b3">CHOOSE</text><text x="612" y="431.6">The Package</text></g>
<g filter="url(#b1)" fill="#ef7774"><rect x="521" y="424" width="58" height="5"/><rect x="612" y="438" width="50" height="5"/></g>
<g fill="#55555a" filter="url(#b05)"><rect x="521" y="470" width="20" height="1.2"/><rect x="521" y="472.6" width="28" height="1.2"/><rect x="588" y="472" width="14" height="1.2"/><rect x="650" y="472" width="14" height="1.2"/></g>
</g></g>
<g id="c4">
<defs><clipPath id="cp4"><rect x="82.8" y="421" width="228.2" height="127.3" rx="1.5"/></clipPath>
<linearGradient id="pu" x1="0" y1="0" x2="1" y2="1"><stop offset="0" stop-color="#7d3aae"/><stop offset="1" stop-color="#652a96"/></linearGradient>
<linearGradient id="bl1" x1="0" y1="0" x2="0" y2="1"><stop offset="0" stop-color="#3f97b4"/><stop offset="1" stop-color="#1c4a72"/></linearGradient>
<linearGradient id="bl2" x1="0" y1="0" x2="0" y2="1"><stop offset="0" stop-color="#2a6b8e"/><stop offset="1" stop-color="#163352"/></linearGradient></defs>
<g clip-path="url(#cp4)">
<rect x="82" y="420" width="230" height="130" fill="url(#pu)"/>
<ellipse cx="122" cy="486" rx="89.5" ry="96" fill="#c3a3e2"/>
<circle cx="126" cy="464.2" r="24.5" fill="#8a4fc2"/>
<circle cx="305" cy="560" r="33" fill="#b58bd9"/>
<!-- building -->
<path d="M82 548.5 L82 528 L90 516 L102 504 L114 498 L129.6 478.6 L147.6 486 L157.2 475 L183.6 492 L184 518 L200 536 L208 548.5Z" fill="url(#bl1)"/>
<path d="M129.6 478.6 L147.6 486 L146 548.5 L126 548.5Z" fill="url(#bl2)"/>
<path d="M157.2 475 L183.6 492 L184 548.5 L158 548.5Z" fill="url(#bl2)" opacity="0.85"/>
<path d="M82 528 L102 504 L114 498 L112 548.5 L82 548.5Z" fill="#3c8aa8" opacity="0.7"/>
<path d="M146 500 L151 496 L150 524 L145 528Z" fill="#14304e" opacity="0.8"/>
<path d="M184 518 L208 548.5 L184 548.5Z" fill="#2f7f9c"/>
<g filter="url(#b1)" opacity="0.55"><path d="M116 506 L128 486 L127 520 L114 540Z" fill="#5fb5c8"/><path d="M148 490 L157 479 L157 530 L148 540Z" fill="#4aa3bd"/></g>
<polyline points="84,518.2 96,499 135.6,466.6 142.8,472.6 157.2,460.6 186,483.4 219.6,443.8" fill="none" stroke="#fff" stroke-width="2.1" stroke-dasharray="4.2 2.8" stroke-linecap="round"/>
<circle cx="260" cy="450.5" r="9.4" fill="#b992d6" stroke="#f1e6fa" stroke-width="1.3"/>
<path d="M255 454.5 L255 449 L260 444.5 L265 449 L265 454.5 Z M257.6 454.5 L257.6 450.5 L260 448.3 L262.4 450.5 L262.4 454.5" fill="none" stroke="#efe2fa" stroke-width="1.1"/>
<text x="259.6" y="466.6" text-anchor="middle" font-size="3.6" font-weight="bold" fill="#eadcf6" letter-spacing="0.3" filter="url(#b05)" textLength="44" lengthAdjust="spacingAndGlyphs">BEST REAL ESTATE</text>
<text x="258.6" y="484.8" text-anchor="middle" font-size="7.4" fill="#c9aee2" textLength="27.6" lengthAdjust="spacingAndGlyphs" filter="url(#b05)">YEARLY</text>
<text x="259.8" y="501.2" text-anchor="middle" font-size="16.6" font-weight="bold" fill="#fff" textLength="62.3" lengthAdjust="spacingAndGlyphs">REPORT</text>
<text x="259.4" y="511.6" text-anchor="middle" font-size="9" fill="#d3bde8" textLength="25.4" lengthAdjust="spacingAndGlyphs" filter="url(#b05)">20XX</text>
<rect x="242" y="524.5" width="34.7" height="1" fill="#d9c6ee"/>
</g></g>
<g id="c5">
<defs><clipPath id="cp5"><rect x="323.3" y="504" width="171.5" height="125" rx="2"/></clipPath></defs>
<rect x="323.3" y="504" width="171.5" height="125" rx="2" fill="#eea2ea"/>
<g clip-path="url(#cp5)">
<text x="409.3" y="551" text-anchor="middle" font-size="39.5" font-weight="bold" fill="#4a0a12" stroke="#4a0a12" stroke-width="4.6" stroke-linejoin="round" textLength="138" lengthAdjust="spacingAndGlyphs">MUSICBOX</text>
<text x="409.3" y="551" text-anchor="middle" font-size="39.5" font-weight="bold" fill="#e3141e" stroke="#e3141e" stroke-width="1.5" stroke-linejoin="round" textLength="138" lengthAdjust="spacingAndGlyphs">MUSICBOX</text>
<rect x="338" y="552.6" width="146" height="2" fill="#f06ab6" filter="url(#b05)"/>
<rect x="367" y="554.5" width="58" height="2.6" fill="#6a22b6"/>
<rect x="331" y="559.8" width="155" height="70" fill="#6b2aa4"/>
<rect x="332.6" y="561.4" width="151.8" height="70" fill="none" stroke="#45107e" stroke-width="1.2"/>
<rect x="335" y="564" width="148" height="15" fill="#f8e61c"/>
<text x="409" y="577.6" text-anchor="middle" font-size="14" font-weight="bold" font-style="italic" fill="#35b08c" stroke="#1f7f86" stroke-width="1.3" paint-order="stroke" textLength="97" lengthAdjust="spacingAndGlyphs" filter="url(#b05)">PUNPUEHOAVIO</text>
<rect x="335" y="584" width="86.7" height="14.6" rx="2" fill="#8f2de6"/>
<rect x="425.6" y="584" width="57.4" height="14.6" rx="2" fill="#ec1622"/>
<text x="378" y="597.3" text-anchor="middle" font-size="15.6" font-weight="bold" fill="#f9e24a" stroke="#f9e24a" stroke-width="0.7" textLength="61" lengthAdjust="spacingAndGlyphs">NERVANO</text>
<text x="454" y="597.3" text-anchor="middle" font-size="15.6" font-weight="bold" fill="#f9d63a" stroke="#f9d63a" stroke-width="0.7" textLength="17" lengthAdjust="spacingAndGlyphs">U4</text>
<rect x="335" y="603.4" width="148" height="4.8" rx="1.5" fill="#ee8fd0"/>
<rect x="335" y="612.4" width="86.7" height="14" fill="#41b4e6"/>
<rect x="425.6" y="612.4" width="57.4" height="14" fill="#e8161f"/>
<text x="378.6" y="640" text-anchor="middle" font-size="32" font-weight="bold" fill="#4a0a12" stroke="#4a0a12" stroke-width="4" textLength="72" lengthAdjust="spacingAndGlyphs">ODDO</text>
<text x="378.6" y="640" text-anchor="middle" font-size="32" font-weight="bold" fill="#e3141e" stroke="#e3141e" stroke-width="1.4" textLength="72" lengthAdjust="spacingAndGlyphs">ODDO</text>
<text x="454.5" y="621.6" text-anchor="middle" font-size="4.6" font-weight="bold" fill="#fbd6d6" textLength="51" lengthAdjust="spacingAndGlyphs" filter="url(#b05)">WHITE SABBATH</text>
</g></g>
<g id="c6">
<defs><clipPath id="cp6"><rect x="506.8" y="504" width="165.4" height="125" rx="1"/></clipPath>
<linearGradient id="pth" gradientUnits="userSpaceOnUse" x1="0" y1="536" x2="0" y2="630"><stop offset="0" stop-color="#ea6f8f"/><stop offset="0.45" stop-color="#f08c86"/><stop offset="0.7" stop-color="#f6a85e"/><stop offset="1" stop-color="#f6a04c"/></linearGradient></defs>
<rect x="506.8" y="504" width="165.4" height="125" fill="#272627"/>
<g clip-path="url(#cp6)">
<text x="589.6" y="525.4" text-anchor="middle" font-family="Liberation Serif, serif" font-weight="bold" font-size="10.6" fill="#f4f4f4" textLength="103" lengthAdjust="spacingAndGlyphs" filter="url(#b05)">What Is Customer Care?</text>
<path id="wind" d="M558.4 536 C558.4 546 566 548.4 578.4 548.4 A11.1 11.1 0 0 0 600.6 548.4 L610.5 548.4 A10.8 10.8 0 0 1 610.5 570 L568.5 570 A10.5 10.5 0 0 0 568.5 591 L578.4 591 A11.1 11.1 0 0 0 600.6 591 L610.5 591 A11 11 0 0 1 610.5 613 L568.5 613 A10.5 10.5 0 0 0 568.5 634" fill="none" stroke="url(#pth)" stroke-width="2.8" stroke-linecap="round"/>
<path d="M558.4 536 C558.4 546 566 548.4 578.4 548.4 A11.1 11.1 0 0 0 600.6 548.4 L610.5 548.4 A10.8 10.8 0 0 1 610.5 570 L568.5 570 A10.5 10.5 0 0 0 568.5 591 L578.4 591 A11.1 11.1 0 0 0 600.6 591 L610.5 591 A11 11 0 0 1 610.5 613 L568.5 613 A10.5 10.5 0 0 0 568.5 634" fill="none" stroke="#ffd9cf" stroke-opacity="0.55" stroke-width="0.9"/>
<circle cx="589.5" cy="548" r="8.3" fill="#4a4847"/><circle cx="589.5" cy="548" r="3.6" fill="#e6e6e6" filter="url(#b05)"/>
<circle cx="589.5" cy="590.4" r="8.3" fill="#454342"/>
<circle cx="590.8" cy="588.8" r="2.6" fill="none" stroke="#f4f4f4" stroke-width="1.3"/><path d="M588.8 591 L585.6 594.4" stroke="#f4f4f4" stroke-width="1.5" stroke-linecap="round"/>
<g filter="url(#b05)">
<rect x="546" y="551.5" width="10" height="3" fill="#a63a4c" filter="url(#b1)"/>
<rect x="517" y="559.8" width="40" height="1" fill="#a5a5a5"/><rect x="538" y="563.6" width="19" height="1" fill="#9a9a9a"/>
<rect x="526" y="594" width="30" height="3.4" fill="#a4742c" filter="url(#b1)"/>
<rect x="512" y="603.6" width="44" height="1" fill="#a5a5a5"/><rect x="521" y="607.4" width="35" height="1" fill="#8f8f8f"/>
<rect x="626" y="540" width="16" height="3" fill="#8a3340" filter="url(#b1)"/>
<rect x="630" y="550" width="26" height="12" fill="#4b4a4b" filter="url(#b1)"/>
<rect x="623" y="584" width="20" height="3" fill="#8f6a2c" filter="url(#b1)"/>
<rect x="630" y="593" width="26" height="12" fill="#4b4a4b" filter="url(#b1)"/>
</g>
</g></g>
<g id="c7">
<rect x="684.4" y="421.5" width="206.8" height="126" rx="2.5" fill="#f8d8de"/>
<ellipse cx="785.5" cy="476" rx="18" ry="17.5" fill="#54361c" filter="url(#b1)"/>
<circle cx="789.9" cy="471" r="19.6" fill="#f8dc54"/>
<circle cx="789.9" cy="471" r="16.4" fill="#f6cd2e"/>
<g stroke="#fbe88c" stroke-width="1.6" stroke-linecap="round" filter="url(#b05)"><path d="M789.9 471 L793 455.5 M789.9 471 L804.5 464.5 M789.9 471 L803 481 M789.9 471 L789 487 M789.9 471 L775 478.5 M789.9 471 L777 461.5"/></g>
<circle cx="789.9" cy="471" r="2" fill="#fff3b8" filter="url(#b05)"/>
<path d="M776 460 A 18 18 0 0 1 800 456" stroke="#fdf0a0" stroke-width="1.4" fill="none" filter="url(#b05)" opacity="0.8"/>
<text x="789.6" y="515" text-anchor="middle" font-size="5.8" fill="#5a4a52" textLength="51.5" lengthAdjust="spacing" filter="url(#b05)">LEMONADE</text>
<rect x="738.7" y="512.2" width="18.7" height="0.9" fill="#4c3c44"/><rect x="821.6" y="512.2" width="18.7" height="0.9" fill="#4c3c44"/>
</g>
<g id="c8">
<defs><clipPath id="cp8"><rect x="686" y="559.5" width="206.3" height="70" rx="2.5"/></clipPath></defs>
<rect x="686" y="559.5" width="206.3" height="70" rx="2.5" fill="#a9f9e4"/>
<g clip-path="url(#cp8)">
<circle cx="703" cy="573.8" r="3.3" fill="#fff"/><circle cx="788.2" cy="573.8" r="3.3" fill="#fff"/><circle cx="872" cy="573.8" r="3.3" fill="#fff"/>
<g fill="#8be2cf" stroke="#175a52" stroke-width="1">
<path d="M789 616.5 C783 611 772 595 756 594.5 C744 597 739 610 738 630 L789 630Z"/>
<path d="M789 616.5 C795 611 806 595 822 594.5 C834 597 839 610 840 630 L789 630Z"/>
</g>
<g fill="none" stroke="#175a52" stroke-width="0.8">
<path d="M783 612 C774 602 764 598 754 600 C746 604 743 614 742 630 M778 610 C770 604 762 604 756 608 C750 613 748 620 748 630 M774 612 C766 610 760 613 757 620 L756 630 M770 616 C765 617 762 622 762 630 M752 601 C760 606 766 612 770 622 M746 606 C754 610 760 618 764 628"/>
<path d="M795 612 C804 602 814 598 824 600 C832 604 835 614 836 630 M800 610 C808 604 816 604 822 608 C828 613 830 620 830 630 M804 612 C812 610 818 613 821 620 L822 630 M808 616 C813 617 816 622 816 630 M826 601 C818 606 812 612 808 622 M832 606 C824 610 818 618 814 628"/>
</g>
<text x="789" y="609.6" text-anchor="middle" font-size="28.5" font-weight="bold" fill="#0a0a0a" stroke="#0a0a0a" stroke-width="1.9" textLength="8.6" lengthAdjust="spacingAndGlyphs">L</text>
</g></g>
<g id="clouds">
<defs><clipPath id="clp"><circle cx="16.76" cy="31.4" r="16.8"/><circle cx="33.07" cy="13.6" r="13.67"/><circle cx="54.48" cy="21.5" r="15.56"/><circle cx="76.4" cy="33.8" r="14.4"/><rect x="16.76" y="22" width="59.64" height="26.2"/></clipPath></defs>
<g transform="translate(83,300.6)" opacity="0.97" clip-path="url(#clp)"><rect width="92" height="49" fill="url(#gc1)"/><rect width="92" height="49" fill="url(#gc1b)"/></g>
<g transform="translate(691.8,252) scale(1.795)" clip-path="url(#clp)"><rect width="92" height="49" fill="url(#gc2)"/><rect width="92" height="49" fill="url(#gc2b)"/></g>
<g transform="translate(768,310) scale(1.232,1.2)" opacity="0.82" clip-path="url(#clp)"><rect width="92" height="49" fill="url(#gc3)"/></g>
<circle cx="164" cy="622.5" r="29" fill="#93dbe8"/>
<g transform="translate(163.6,585.8) scale(1.285)" clip-path="url(#clp)"><rect width="92" height="49" fill="url(#gc4)"/></g>
</g>
</svg>
</div>
<div id="sb"><div id="sbt"></div></div>
<div id="dk">
<div class="a" style="left:2px;top:94px;width:19px;height:21px;background:#2a292d;border-radius:2px;"></div>
<svg style="top:2.0px" width="16" height="16" viewBox="0 0 16 16"><path d="M4 5 C4 3.5 12 3.5 12 5 V11 C12 12.5 4 12.5 4 11Z" fill="#8e8d93"/><ellipse cx="8" cy="5" rx="4" ry="1.5" fill="#b9b8bd"/></svg>
<svg style="top:20.5px" width="16" height="16" viewBox="0 0 16 16"><path d="M4.5 4 V12 M4.5 4.5 H11.5" stroke="#d4d4d8" stroke-width="1.2" fill="none"/><rect x="3.3" y="3" width="2.4" height="2.4" fill="#fff"/><rect x="3.3" y="10.5" width="2.4" height="2.4" fill="#fff"/><rect x="10.5" y="3" width="2.4" height="2.4" fill="#fff"/><path d="M8 8 H12 V12 H8Z M10 8 V12 M8 10 H12" stroke="#8a898e" stroke-width="0.7" fill="none"/></svg>
<svg style="top:40.0px" width="16" height="16" viewBox="0 0 16 16"><path d="M8 3.5 L12.5 6.5 L8 9.5 L3.5 6.5Z" fill="#eeeeF2"/><path d="M3.5 9 L8 12 L12.5 9" stroke="#e0e0e4" stroke-width="1.5" fill="none"/></svg>
<svg style="top:58.5px" width="16" height="16" viewBox="0 0 16 16"><rect x="3.8" y="4.8" width="8.6" height="6.6" rx="1.6" stroke="#bdbdc2" stroke-width="1.3" fill="none"/></svg>
<svg style="top:77.0px" width="16" height="16" viewBox="0 0 16 16"><path d="M4 7 L7 4 L12.5 9 L9.5 12Z" stroke="#d0d0d4" stroke-width="1.4" fill="none"/></svg>
<svg style="top:96.5px" width="16" height="16" viewBox="0 0 16 16"><path d="M4 11.5 H12 L10 7.5 H6Z" stroke="#e0e0e4" stroke-width="1.2" fill="none"/><path d="M8 7.5 V4.5" stroke="#e0e0e4" stroke-width="1.2"/></svg>
<svg style="top:115.5px" width="16" height="16" viewBox="0 0 16 16"><path d="M5.5 5 H10.5 L10.5 9 L7.5 12 H5.5Z" stroke="#8c8b91" stroke-width="1.2" fill="none" transform="rotate(20 8 8)"/></svg>
</div>
<div id="pal"><i style="top:0.0px;height:9.8px;background:#ffffff;border-radius:1.5px;"></i><i style="top:12.5px;height:10.8px;background:#050505;"></i><i style="top:23.0px;height:9.3px;background:#1c1c1d;"></i><i style="top:32.0px;height:10.3px;background:#343436;"></i><i style="top:42.0px;height:10.3px;background:#525254;"></i><i style="top:52.0px;height:9.3px;background:#666668;"></i><i style="top:61.0px;height:10.3px;background:#7d7d7f;"></i><i style="top:71.0px;height:10.3px;background:#949496;"></i><i style="top:81.0px;height:9.3px;background:#acacae;"></i><i style="top:90.0px;height:10.3px;background:#c3c3c5;"></i><i style="top:100.0px;height:10.3px;background:#dcdcde;"></i><i style="top:110.0px;height:17.0px;background:#ffffff;"></i><i style="top:126.7px;height:10.6px;background:#0a14e6;"></i><i style="top:137.0px;height:10.3px;background:#82f0f4;"></i><i style="top:147.0px;height:10.8px;background:#78ee3c;"></i><i style="top:157.5px;height:10.8px;background:#f7f020;"></i><i style="top:168.0px;height:10.3px;background:#e0121c;"></i><i style="top:178.0px;height:10.3px;background:#d21ee6;"></i><i style="top:188.0px;height:9.3px;background:#8a20c8;"></i><i style="top:199.7px;height:9.2px;background:#f07a28;"></i><i style="top:208.6px;height:11.1px;background:#f4a0c8;"></i><i style="top:230.0px;height:11.3px;background:#cfd0fa;"></i><i style="top:241.0px;height:11.3px;background:#a4a8fa;"></i><i style="top:252.0px;height:10.3px;background:#8c92f6;"></i><i style="top:262.0px;height:11.3px;background:#7478ee;"></i><i style="top:273.0px;height:11.3px;background:#5860de;"></i><i style="top:284.0px;height:9.8px;background:#3038aa;"></i><i style="top:293.5px;height:10.4px;background:#0b0b6c;"></i><i style="top:303.6px;height:10.7px;background:#5a70a8;"></i><i style="top:314.0px;height:10.3px;background:#80d0ec;"></i><i style="top:324.0px;height:10.3px;background:#b8f0f4;"></i><i style="top:334.0px;height:11.3px;background:#90c0bc;"></i><i style="top:345.0px;height:11.3px;background:#5f8f8c;"></i><i style="top:356.0px;height:11.3px;background:#39bd8a;"></i><i style="top:367.0px;height:11.3px;background:#58d84e;"></i><i style="top:378.0px;height:17.3px;background:#7ddc3a;"></i></div>
</div>
<svg class="a" style="left:900px;top:560px;" width="100" height="64" viewBox="900 560 100 64">
<defs><filter id="wb" x="-20%" y="-20%" width="140%" height="140%"><feGaussianBlur stdDeviation="0.35"/></filter></defs>
<g fill="#0a0a0a" filter="url(#wb)">
<ellipse cx="941" cy="604" rx="24.5" ry="23"/>
<path d="M921 590 L918.5 576 L926 585 L928.5 578.5 L932 583 L936 577.5 L941 581.5 L945 576.5 L949 581 L954 577.5 L956 583 L961.5 581 L962 588 L968 591 L963 596 L967 603 L961 606 L965 613 L958 615 L956 624 L914 624 L912.5 616 L907 613 L914 607 L910 598 L917.5 595 L915 588Z"/>
<circle cx="903" cy="582.5" r="1.3"/><circle cx="908" cy="580" r="0.9"/><circle cx="911" cy="584" r="1.1"/><circle cx="913" cy="576.5" r="0.9"/><circle cx="906" cy="587" r="0.7"/><circle cx="909" cy="616" r="1.6"/><circle cx="906" cy="610" r="0.8"/><circle cx="913" cy="621" r="1"/>
<path d="M976.5 580 C976 575 983 574 984 579 C989 580 990 586 984.5 586.5 C982 589 977 587 976.5 580Z"/>
<circle cx="990" cy="588" r="0.9"/><circle cx="986" cy="592" r="0.7"/>
<path d="M919 573 L924 586 L922 587Z M930 572 L932 580 L930 581Z"/>
</g>
<g fill="#c81e10" filter="url(#wb)">
<path d="M968 606 C968 599 978 597 984 602 C990 598 998 599 997 604 C996 608 990 607 988 610 C992 614 986 619 978 617 C970 618 966 612 968 606Z"/>
<circle cx="975" cy="598" r="0.9"/><circle cx="992" cy="612" r="1.2"/><circle cx="996" cy="617" r="1"/><circle cx="970" cy="620" r="1.3"/><circle cx="987" cy="596" r="0.8"/><circle cx="993" cy="593" r="0.6"/><circle cx="965" cy="622" r="0.8"/>
</g>
<path d="M949 617 L955 617 L957 624 L948 624Z" fill="#6cc83c"/>
<text x="918.3" y="598.2" font-family="'Liberation Sans','Noto Sans CJK SC',sans-serif" font-weight="bold" font-size="10.6" fill="#fff" textLength="43.4" lengthAdjust="spacing">移花接木</text>
<text x="911.5" y="615" font-family="'Liberation Sans',sans-serif" font-style="italic" font-weight="bold" font-size="16" fill="#fff" stroke="#111" stroke-width="0.4">M</text>
<text x="926" y="615" font-family="'Liberation Sans',sans-serif" font-weight="bold" font-size="12.5" fill="#d21f12">a</text>
<text x="933" y="615" font-family="'Liberation Sans',sans-serif" font-weight="bold" font-size="12.5" fill="#fff">c</text>
<text x="939.6" y="614.6" font-family="'Liberation Sans',sans-serif" font-weight="bold" font-style="italic" font-size="11" fill="#fff" textLength="27" lengthAdjust="spacingAndGlyphs">-GM</text>
<text x="967" y="614.6" font-family="'Liberation Sans',sans-serif" font-weight="bold" font-style="italic" font-size="8.6" fill="#fff" textLength="19" lengthAdjust="spacingAndGlyphs">.com</text>
</svg>

</body></html>
